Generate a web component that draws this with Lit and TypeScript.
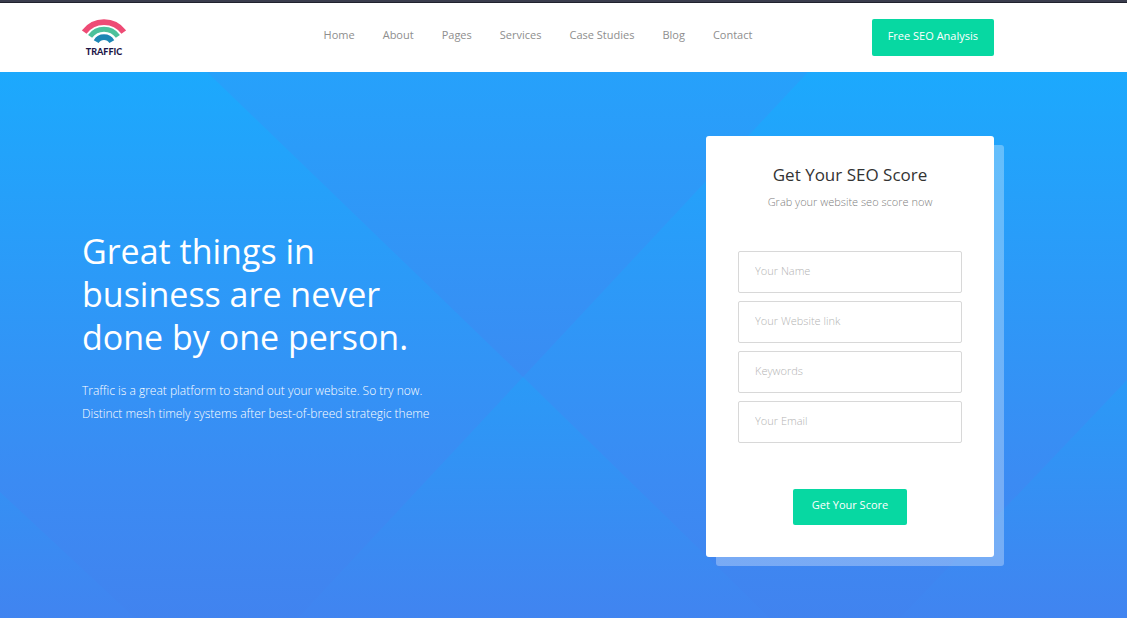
import { LitElement, html, css } from "lit";
import { customElement } from "lit/decorators.js";

@customElement("traffic-logo")
class TrafficLogo extends LitElement {
  static styles = css`
    :host { display: block; }
    .mark { display: block; width: 44px; height: 37px; }
    .word { font: 900 9px Lato, "Open Sans", sans-serif; fill: #1d1546; }
  `;
  render() {
    return html`
      <svg class="mark" viewBox="0 0 44 37" role="img" aria-label="Traffic">
        <g fill="none">
          <path d="M2.2 13.1 A24.5 24.5 0 0 1 41.8 13.1" stroke="#ee4b75" stroke-width="5.8" />
          <path d="M8.1 17.4 A17.2 17.2 0 0 1 35.9 17.4" stroke="#4cc19b" stroke-width="5" />
          <path d="M14.2 22.6 A9 9 0 0 1 29.8 22.6" stroke="#1c86b4" stroke-width="5.6" />
        </g>
        <text class="word" x="22" y="36" text-anchor="middle">TRAFFIC</text>
      </svg>
    `;
  }
}

@customElement("site-header")
class SiteHeader extends LitElement {
  static styles = css`
    :host { display: block; background: #fff; border-top: 2px solid #3a3d4d; }
    .bar {
      display: grid;
      grid-template-columns: 1fr auto 1fr;
      align-items: start;
      padding: 16px 133px 16px 82px;
      border-top: 1px solid #20222e;
    }
    .nav { display: flex; gap: 28px; padding-top: 8px; }
    .link { color: #8e8e8e; font-size: 11px; line-height: 16px; text-decoration: none; }
    .cta {
      justify-self: end;
      background: #07d8a2;
      color: #fff;
      border-radius: 2px;
      padding: 8px 16px 12px;
      font-size: 11px;
      line-height: 17px;
      text-decoration: none;
    }
  `;
  private links = ["Home", "About", "Pages", "Services", "Case Studies", "Blog", "Contact"];
  render() {
    return html`
      <header class="bar">
        <traffic-logo></traffic-logo>
        <nav class="nav">${this.links.map((l) => html`<a class="link" href="#">${l}</a>`)}</nav>
        <a class="cta" href="#">Free SEO Analysis</a>
      </header>
    `;
  }
}

@customElement("score-form")
class ScoreForm extends LitElement {
  static styles = css`
    :host { display: block; }
    .card {
      box-sizing: border-box;
      width: 288px;
      padding: 26px 32px 32px;
      background: #fff;
      border-radius: 3px;
      box-shadow: 10px 9px 0 rgba(255, 255, 255, 0.3);
      text-align: center;
    }
    .title { margin: 0; font-size: 17px; line-height: 26px; font-weight: 400; color: #333; }
    .note { margin: 4px 0 0; font-size: 11px; line-height: 20px; font-weight: 300; color: #808080; }
    .fields { display: grid; gap: 8px; margin: 39px 0 46px; }
    .field {
      box-sizing: border-box;
      display: block;
      width: 100%;
      padding: 11px 16px 13px;
      border: 1px solid #d8d8d8;
      border-radius: 2px;
      background: #fff;
      font: 300 11px/16px "Open Sans", sans-serif;
      color: #333;
    }
    .field::placeholder { color: #b4b4b4; opacity: 1; }
    .submit {
      display: block;
      margin: 0 auto;
      border: 0;
      border-radius: 2px;
      padding: 7px 19px 12px;
      background: #07d8a2;
      color: #fff;
      font: 400 11px/17px "Open Sans", sans-serif;
    }
  `;
  private fields = ["Your Name", "Your Website link", "Keywords", "Your Email"];
  render() {
    return html`
      <form class="card" @submit=${(e: Event) => e.preventDefault()}>
        <h2 class="title">Get Your SEO Score</h2>
        <p class="note">Grab your website seo score now</p>
        <div class="fields">
          ${this.fields.map((f) => html`<input class="field" type="text" placeholder=${f} aria-label=${f} />`)}
        </div>
        <button class="submit" type="submit">Get Your Score</button>
      </form>
    `;
  }
}

@customElement("app-root")
class AppRoot extends LitElement {
  static styles = css`
    :host {
      display: flex;
      flex-direction: column;
      min-height: 100vh;
      font-family: "Open Sans", sans-serif;
    }
    .hero {
      position: relative;
      flex: 1;
      display: flex;
      justify-content: space-between;
      align-items: start;
      gap: 32px;
      padding: 64px 133px 52px 82px;
    }
    .backdrop { position: absolute; inset: 0; width: 100%; height: 100%; z-index: -1; }
    .copy { padding-top: 94px; color: #fff; }
    .headline { margin: 0; max-width: 350px; font-size: 34px; line-height: 43px; font-weight: 400; }
    .lead { margin: 20px 0 0; max-width: 360px; font-size: 12px; line-height: 23px; font-weight: 300; }
  `;
  render() {
    return html`
      <site-header></site-header>
      <main class="hero">
        <svg class="backdrop" viewBox="0 0 1127 546" preserveAspectRatio="none" aria-hidden="true">
          <defs>
            <linearGradient id="side" gradientUnits="userSpaceOnUse" x1="0" y1="0" x2="0" y2="546">
              <stop offset="0" stop-color="#1ca9fd" />
              <stop offset="0.75" stop-color="#3b8bf3" />
              <stop offset="1" stop-color="#4183ef" />
            </linearGradient>
            <linearGradient id="top" gradientUnits="userSpaceOnUse" x1="0" y1="0" x2="0" y2="305">
              <stop offset="0" stop-color="#26a1fb" />
              <stop offset="1" stop-color="#3a8cf3" />
            </linearGradient>
            <linearGradient id="low" gradientUnits="userSpaceOnUse" x1="0" y1="305" x2="0" y2="546">
              <stop offset="0" stop-color="#2a9af7" />
              <stop offset="1" stop-color="#4184f0" />
            </linearGradient>
          </defs>
          <rect width="1127" height="546" fill="url(#side)" />
          <path d="M207 0H808L523 305Z" fill="url(#top)" />
          <path d="M523 305L770 546H298Z" fill="url(#low)" />
          <path d="M0 420L135 546H0Z" fill="url(#low)" />
          <path d="M1127 308V546H900Z" fill="url(#low)" />
        </svg>
        <section class="copy">
          <h1 class="headline">Great things in business are never done by one person.</h1>
          <p class="lead">
            Traffic is a great platform to stand out your website. So try now. Distinct mesh timely systems after
            best-of-breed strategic theme
          </p>
        </section>
        <score-form></score-form>
      </main>
    `;
  }
}
